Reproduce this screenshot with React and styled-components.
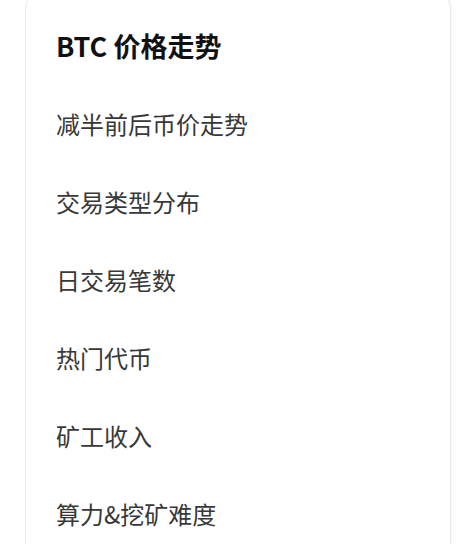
import React from "react"
import styled, { createGlobalStyle } from "styled-components"

const GlobalStyle = createGlobalStyle`
    html, body {
        margin: 0;
        padding: 0;
        background: #ffffff;
    }
    body {
        font-family: "Noto Sans CJK SC", "Noto Sans", sans-serif;
    }
`

const items = [
    "减半前后币价走势",
    "交易类型分布",
    "日交易笔数",
    "热门代币",
    "矿工收入",
    "算力&挖矿难度",
]

const App = () => {
    return (
        <Page>
            <GlobalStyle />
            <Card>
                <Row $title>BTC 价格走势</Row>
                {items.map(item => <Row key={item}>{item}</Row>)}
            </Card>
        </Page>
    )
}

const Page = styled.div`
    height: 100vh;
    overflow: hidden;
`

const Card = styled.div`
    display: flex;
    flex-direction: column;
    margin: -8px 5px 0 25px;
    padding: 13px 30px 0 30px;
    background: #ffffff;
    border: 1px solid #e8e8e8;
    border-radius: 16px;
    box-shadow: 1px 0 2px rgba(0, 0, 0, 0.04);
    height: 600px;
`

const Row = styled.div`
    height: 78px;
    flex-shrink: 0;
    display: flex;
    align-items: center;
    font-size: ${p => (p.$title ? "27px" : "24px")};
    font-weight: ${p => (p.$title ? 700 : 400)};
    color: ${p => (p.$title ? "#111111" : "#383838")};
    white-space: nowrap;
`

export default App
